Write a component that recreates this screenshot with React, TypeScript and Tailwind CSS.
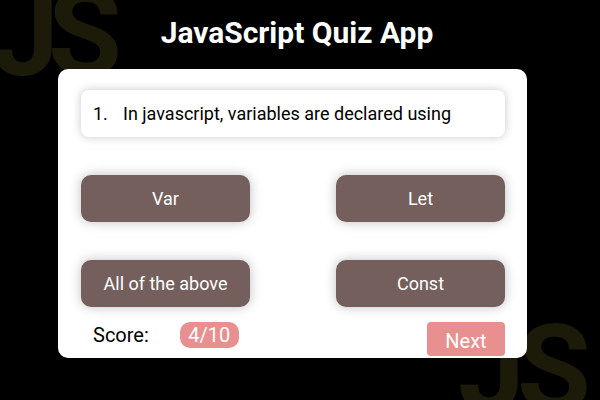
const options = ['Var', 'Let', 'All of the above', 'Const']

export default function App() {
  return (
    <div className="relative h-[400px] w-[600px] overflow-hidden bg-black font-['Roboto',sans-serif]">
      {/* decorative background marks */}
      <span className="pointer-events-none absolute left-[-8px] top-[-26px] select-none text-[120px] font-bold leading-none tracking-[-11px] text-[#1c1a08]">
        JS
      </span>
      <span className="pointer-events-none absolute left-[458px] top-[309px] select-none text-[120px] font-bold leading-none tracking-[-8px] text-[#1c1a08]">
        JS
      </span>

      <div className="relative flex flex-col">
        <h1 className="mr-[6px] pt-[16px] text-center text-[30px] font-bold leading-[34px] text-white">
          JavaScript Quiz App
        </h1>

        <div className="ml-[58px] mt-[19px] w-[469px] rounded-[10px] bg-white px-[23px] pb-[2px] pt-[21px]">
          <div className="flex h-[47px] w-[424px] items-center rounded-[8px] bg-white px-3 text-[18px] text-black shadow-[0_0_10px_rgba(0,0,0,0.22)]">
            <span className="w-[30px]">1.</span>
            <span>In javascript, variables are declared using</span>
          </div>

          <div className="mt-[38px] grid w-[424px] grid-cols-[169px_169px] justify-between gap-y-[38px]">
            {options.map((o) => (
              <button
                key={o}
                className="h-[47px] rounded-[10px] bg-[#745f5d] text-[18px] text-white shadow-[0_0_12px_rgba(0,0,0,0.25)]"
              >
                {o}
              </button>
            ))}
          </div>

          <div className="mt-[15px] flex w-[424px] items-start">
            <span className="ml-[12px] text-[20px] leading-[26px] text-black">Score:</span>
            <span className="ml-[31px] flex h-[26px] w-[59px] items-center justify-center rounded-[10px] bg-[#e88f8f] text-[20px] text-white">
              4/10
            </span>
            <button className="ml-auto h-[34px] w-[78px] rounded-[4px] bg-[#e88f8f] pt-[4px] text-[20px] leading-[26px] text-white">
              Next
            </button>
          </div>
        </div>
      </div>
    </div>
  )
}
